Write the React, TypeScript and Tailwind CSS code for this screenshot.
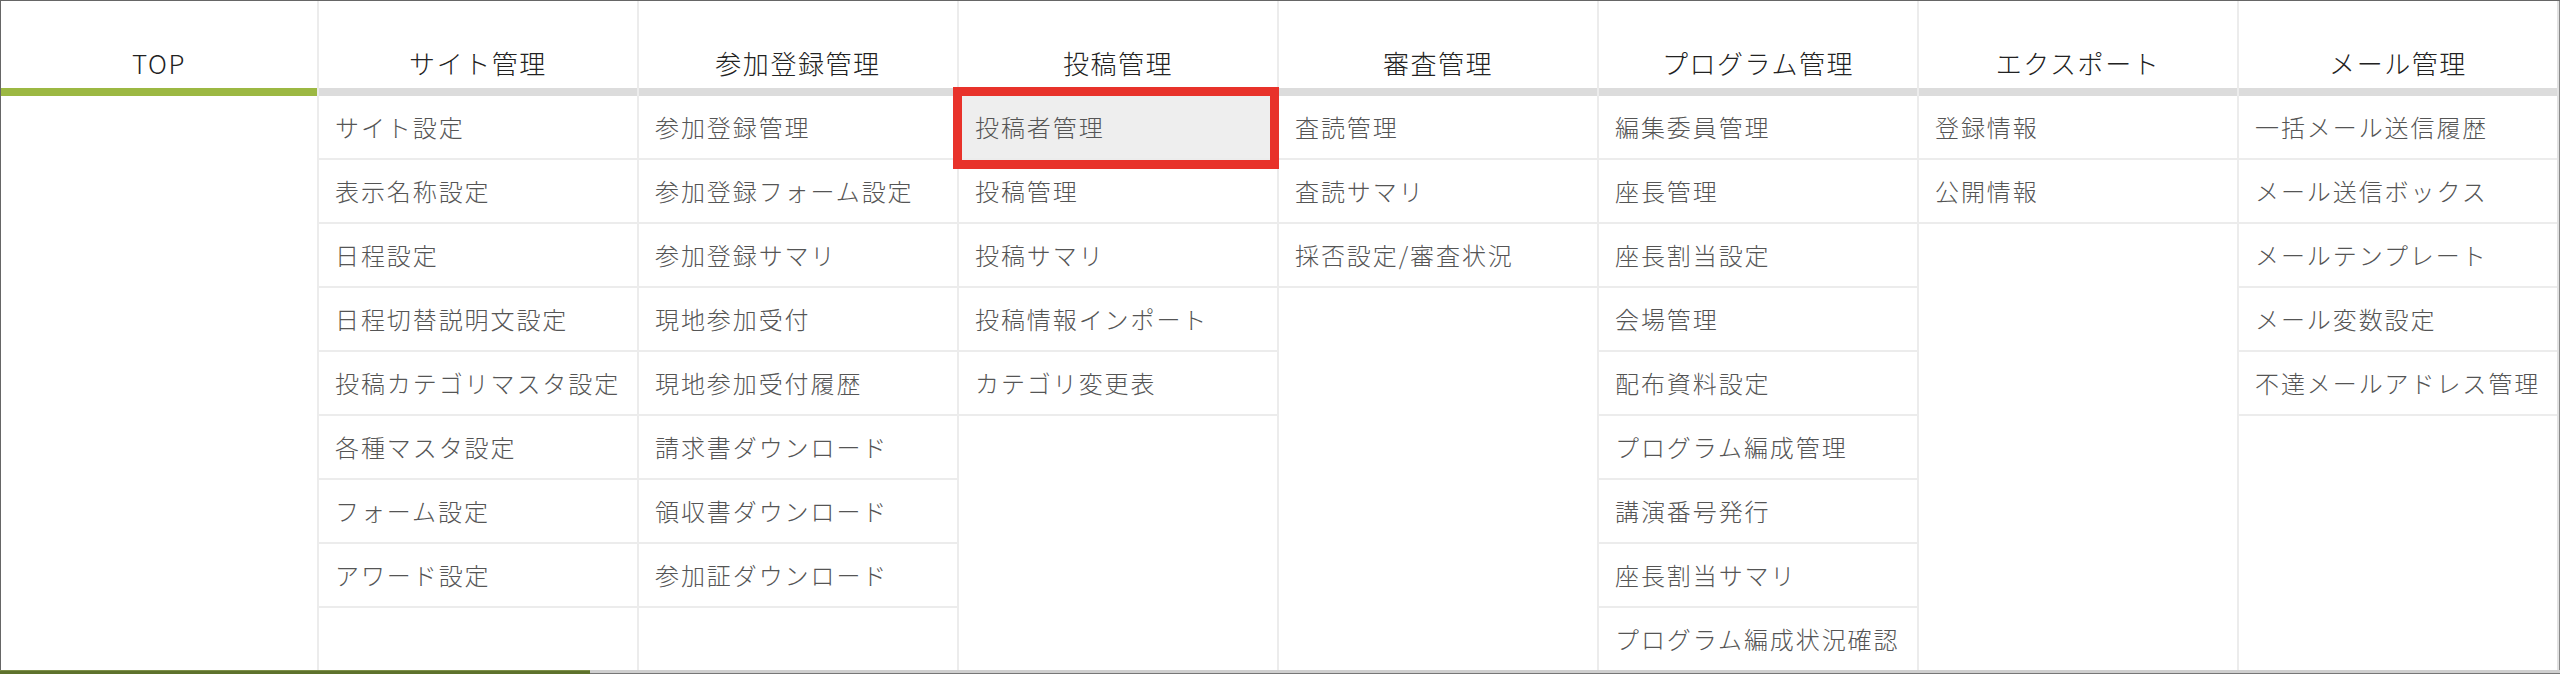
import React from 'react';

interface Column {
  title: string;
  items: string[];
  active?: boolean;
}

const columns: Column[] = [
  { title: 'TOP', items: [], active: true },
  {
    title: 'サイト管理',
    items: ['サイト設定', '表示名称設定', '日程設定', '日程切替説明文設定', '投稿カテゴリマスタ設定', '各種マスタ設定', 'フォーム設定', 'アワード設定'],
  },
  {
    title: '参加登録管理',
    items: ['参加登録管理', '参加登録フォーム設定', '参加登録サマリ', '現地参加受付', '現地参加受付履歴', '請求書ダウンロード', '領収書ダウンロード', '参加証ダウンロード'],
  },
  { title: '投稿管理', items: ['投稿者管理', '投稿管理', '投稿サマリ', '投稿情報インポート', 'カテゴリ変更表'] },
  { title: '審査管理', items: ['査読管理', '査読サマリ', '採否設定/審査状況'] },
  {
    title: 'プログラム管理',
    items: ['編集委員管理', '座長管理', '座長割当設定', '会場管理', '配布資料設定', 'プログラム編成管理', '講演番号発行', '座長割当サマリ', 'プログラム編成状況確認'],
  },
  { title: 'エクスポート', items: ['登録情報', '公開情報'] },
  { title: 'メール管理', items: ['一括メール送信履歴', 'メール送信ボックス', 'メールテンプレート', 'メール変数設定', '不達メールアドレス管理'] },
];

const selectedItem = '投稿者管理';

export default function App() {
  return (
    <div
      className="relative w-[2560px] h-[674px] overflow-hidden flex flex-col bg-white"
      style={{ fontFamily: '"Noto Sans CJK JP", "Noto Sans", sans-serif' }}
    >
      <div className="flex flex-1 min-h-0">
        {/* Menu grid */}
        <div className="flex-1 border-t border-l border-[#666] grid grid-cols-[316px_repeat(7,320px)] overflow-hidden">
          {columns.map((col, i) => (
            <div key={col.title} className={i === 0 ? 'flex flex-col' : 'flex flex-col border-l-2 border-[#ececec]'}>
              <div
                className={
                  col.active
                    ? 'h-[95px] pt-[36px] flex items-center justify-center border-b-8 border-[#9cb843] text-[26px] font-light tracking-[0.06em] text-[#222]'
                    : 'h-[95px] pt-[36px] flex items-center justify-center border-b-8 border-[#dcdcdc] text-[26px] font-light tracking-[0.06em] text-[#222]'
                }
              >
                {col.title}
              </div>
              {col.items.map((item) => (
                <div
                  key={item}
                  className={
                    item === selectedItem
                      ? 'h-[64px] shrink-0 flex items-center pl-[16px] border-b-2 border-[#ececec] bg-[#eeeeee] text-[24px] font-light tracking-[0.08em] text-[#555] whitespace-nowrap'
                      : 'h-[64px] shrink-0 flex items-center pl-[16px] border-b-2 border-[#ececec] text-[24px] font-light tracking-[0.08em] text-[#555] whitespace-nowrap'
                  }
                >
                  {item}
                </div>
              ))}
            </div>
          ))}
        </div>

        {/* Right edge */}
        <div className="w-[3px] border-t border-[#666] flex">
          <div className="w-[2px] bg-[#e2e2e2]" />
          <div className="w-[1px] bg-[#8a8a8a]" />
        </div>
      </div>

      {/* Horizontal scrollbar */}
      <div className="h-[4px] flex">
        <div className="w-[590px] bg-[#5e722c] border-t border-[#7d8f48]" />
        <div className="flex-1 flex flex-col">
          <div className="flex-1 bg-[#cfcfcf]" />
          <div className="h-[1px] bg-[#777]" />
        </div>
      </div>

      {/* Highlight annotation */}
      <div className="absolute left-[953px] top-[87px] w-[326px] h-[82px] border-[9px] border-[#e8322a]" />
    </div>
  );
}
